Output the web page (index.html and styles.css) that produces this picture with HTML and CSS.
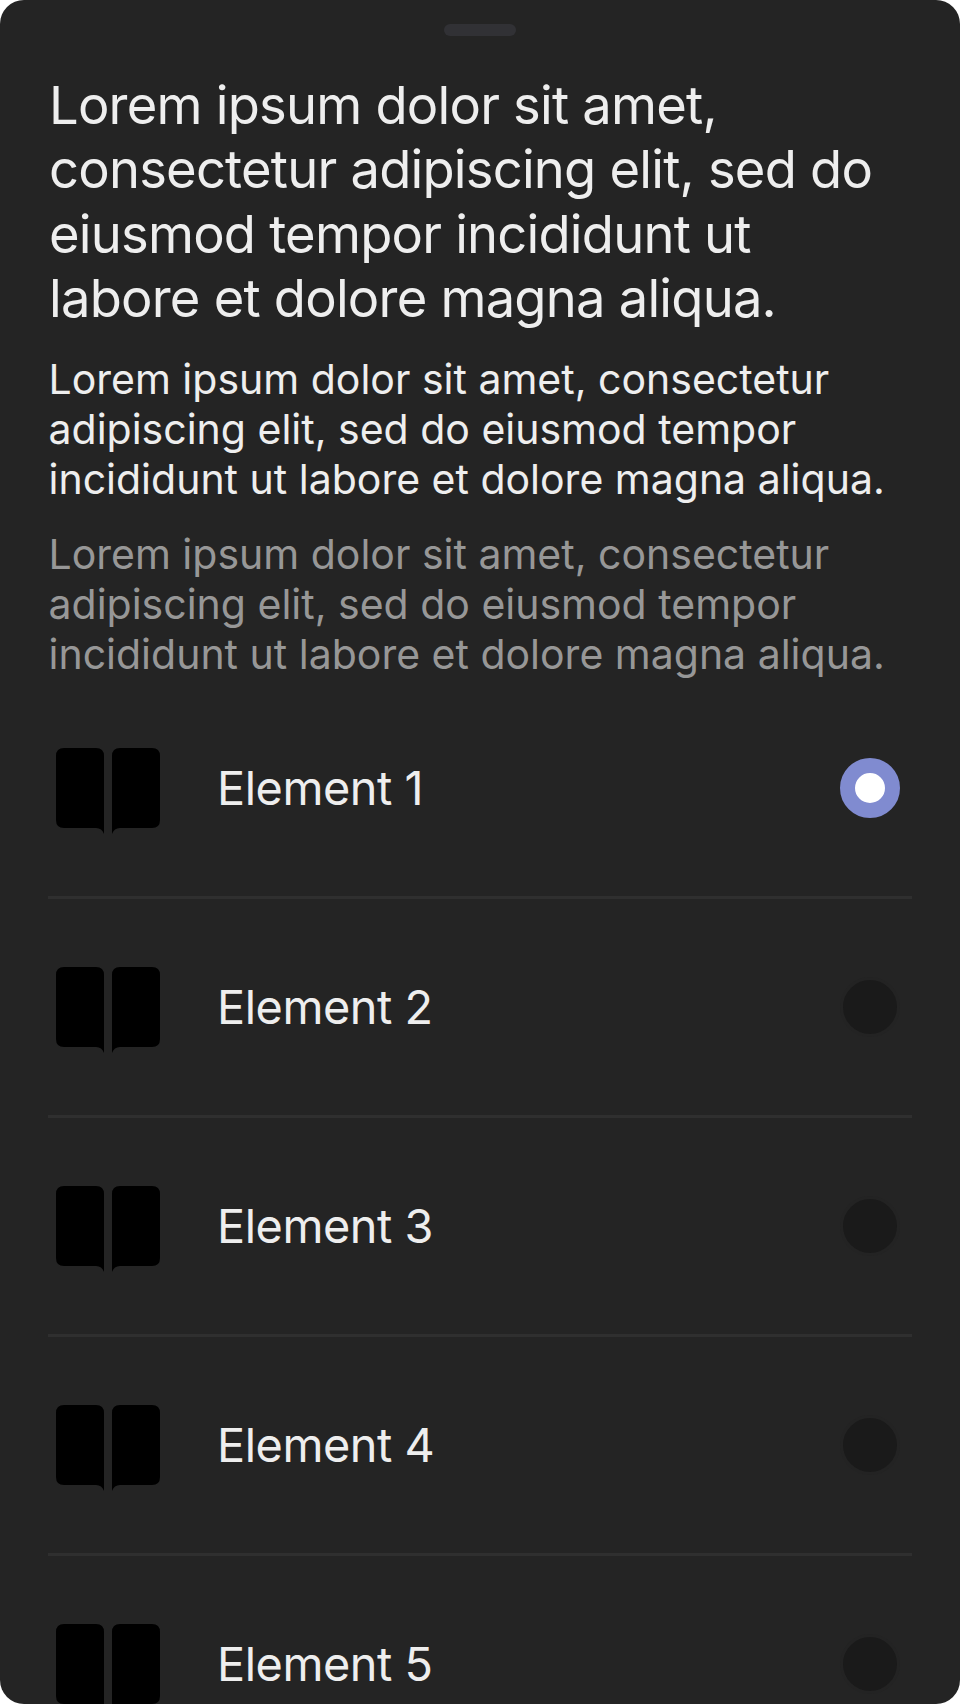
FILE: index.html
```
<!DOCTYPE html>
<html lang="en">
<head>
<meta charset="utf-8">
<title>Bottom sheet</title>
<link rel="stylesheet" href="styles.css">
</head>
<body>
<svg class="defs" width="0" height="0" aria-hidden="true">
  <symbol id="book" viewBox="0 0 120 120">
    <path d="M16 20H48Q56 20 56 28V106Q54 100 48 100H16Q8 100 8 92V28Q8 20 16 20Z"/>
    <path d="M72 20H104Q112 20 112 28V92Q112 100 104 100H72Q66 100 64 106V28Q64 20 72 20Z"/>
  </symbol>
</svg>
<main class="sheet">
  <div class="handle"></div>
  <h1 class="title">Lorem ipsum dolor sit amet,<br>consectetur adipiscing elit, sed do<br>eiusmod tempor incididunt ut<br>labore et dolore magna aliqua.</h1>
  <p class="text">Lorem ipsum dolor sit amet, consectetur<br>adipiscing elit, sed do eiusmod tempor<br>incididunt ut labore et dolore magna aliqua.</p>
  <p class="text muted">Lorem ipsum dolor sit amet, consectetur<br>adipiscing elit, sed do eiusmod tempor<br>incididunt ut labore et dolore magna aliqua.</p>
  <ul class="list">
    <li class="row"><svg class="icon"><use href="#book"/></svg><span class="label">Element 1</span><span class="radio selected"></span></li>
    <li class="row"><svg class="icon"><use href="#book"/></svg><span class="label">Element 2</span><span class="radio"></span></li>
    <li class="row"><svg class="icon"><use href="#book"/></svg><span class="label">Element 3</span><span class="radio"></span></li>
    <li class="row"><svg class="icon"><use href="#book"/></svg><span class="label">Element 4</span><span class="radio"></span></li>
    <li class="row"><svg class="icon"><use href="#book"/></svg><span class="label">Element 5</span><span class="radio"></span></li>
  </ul>
</main>
</body>
</html>
```

FILE: styles.css
```
* { box-sizing: border-box; }
html, body { margin: 0; background: #fff; }
.defs { display: block; }
.sheet {
  width: 960px;
  height: 1704px;
  padding: 24px 48px 0;
  overflow: hidden;
  border-radius: 24px;
  background: #242424;
  color: #eee;
  font-family: Inter, "Liberation Sans", sans-serif;
}
.handle {
  width: 72px;
  height: 12px;
  margin: 0 auto 37px;
  border-radius: 6px;
  background: #313135;
}
.title {
  margin: 0 0 23px;
  padding-left: 1px;
  font-size: 52.5px;
  font-weight: 400;
  letter-spacing: -0.78px;
  line-height: 64.4px;
  white-space: nowrap;
}
.text {
  margin: 0 0 25px;
  padding-left: 0.5px;
  font-size: 41px;
  line-height: 50px;
  white-space: nowrap;
}
.muted { margin-bottom: 1.4px; color: #979797; }
.list { margin: 0; padding: 0; list-style: none; }
.row {
  display: flex;
  align-items: center;
  height: 219px;
  padding-right: 12px;
  border-bottom: 3px solid #2f2f2f;
}
.icon { flex: none; width: 120px; height: 120px; margin-right: 49px; fill: #000; }
.label { flex: 1; font-size: 46.8px; letter-spacing: -0.45px; }
.radio {
  width: 60px;
  height: 60px;
  border: 3px solid #232323;
  border-radius: 50%;
  background: #1a1a1a;
}
.selected { border: 15px solid #808bd0; background: #fff; }
```
